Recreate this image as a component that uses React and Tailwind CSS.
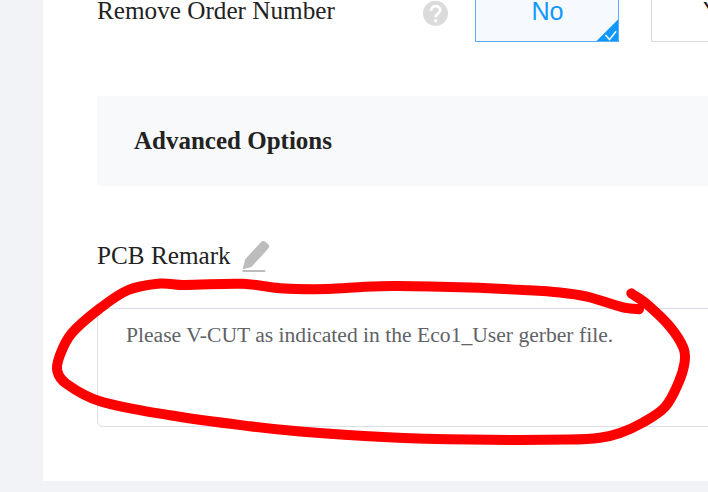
const HelpIcon = () => (
  <svg className="block h-[27px] w-[26px]" viewBox="0 0 26 27" fill="none">
    <circle cx="13.5" cy="13.3" r="12.5" fill="#dbdbdb" />
    <path
      d="M9.1 10.8C9.1 7.9 10.9 6.2 13.5 6.2s4.7 1.6 4.7 4c0 3-4.5 3.4-4.5 7"
      stroke="#fff"
      strokeWidth="2.7"
    />
    <circle cx="13.6" cy="20.7" r="1.7" fill="#fff" />
  </svg>
);

const PencilIcon = () => (
  <svg className="block h-[34px] w-[30px]" viewBox="0 0 30 34" fill="#bcbcbc">
    <path d="M0.6 29.2 3.2 19.2 18.9 2.2Q21.2 -0.2 23.4 1.8L26.2 4.2Q28.4 6.1 26.3 8.6L9.4 26.9Z" />
    <path d="M0.5 30h22.8v2H0.5z" />
  </svg>
);

function Choice({ label, selected }) {
  return (
    <div
      className={
        "relative flex h-[42px] w-36 shrink-0 justify-center border border-t-0 pl-px font-['Liberation_Sans',sans-serif] text-[25.2px] leading-[23px] " +
        (selected ? "border-[#5aacf5] bg-[#f6faff] text-[#1098ff]" : "border-[#d9d9d9] bg-white text-[#222]")
      }
    >
      <span>{label}</span>
      {selected && (
        <svg className="absolute right-0 bottom-0 h-[22px] w-[22px]" viewBox="0 0 22 22">
          <path d="M22 0.5v21.5H0.5z" fill="#1098ff" />
          <path d="m9.5 16 4 4.6 6.6-8.3" fill="none" stroke="#fff" strokeWidth="1.5" />
        </svg>
      )}
    </div>
  );
}

const strokePoints = [
  [639, 309.3], [623, 307.3], [587, 296.7], [560, 292.5], [523, 290], [470, 287.6],
  [397, 286], [365, 286.7], [328, 289], [280, 288.2], [243, 283.8], [183, 285],
  [160, 283.5], [128.3, 290], [100, 308.3], [71.7, 333.3], [60, 355], [57.3, 371],
  [66.7, 384], [100, 401.3], [170, 415.3], [250, 426.3], [300, 431.5], [383, 437],
  [470, 439.6], [570, 439.6], [600, 437.8], [620, 433], [643, 422.5], [665, 407],
  [678.3, 383.3], [684.5, 363], [683.6, 348.3], [670, 326.7], [646.7, 304], [631.3, 293.3],
];

// Catmull-Rom spline through the points, written as cubic segments
function smoothPath(p) {
  let d = `M${p[0][0]} ${p[0][1]}`;
  for (let i = 0; i < p.length - 1; i++) {
    const a = p[i - 1] || p[i];
    const b = p[i];
    const c = p[i + 1];
    const e = p[i + 2] || c;
    // handles are limited to a third of the segment so uneven spacing stays smooth
    const len = Math.hypot(c[0] - b[0], c[1] - b[1]) / 3;
    const t1 = len / Math.hypot(c[0] - a[0], c[1] - a[1]);
    const t2 = len / Math.hypot(e[0] - b[0], e[1] - b[1]);
    d += `C${b[0] + (c[0] - a[0]) * t1} ${b[1] + (c[1] - a[1]) * t1} ${c[0] - (e[0] - b[0]) * t2} ${c[1] - (e[1] - b[1]) * t2} ${c[0]} ${c[1]}`;
  }
  return d;
}

export default function App() {
  return (
    <div className="relative h-[492px] w-[708px] overflow-hidden bg-[#f1f3f7] pl-[43px] font-['Liberation_Serif',serif] text-[25.2px] leading-7 text-[#222]">
      <main className="h-[481px] w-[780px] bg-white pl-[54px]">
        <div className="flex h-[42px] items-start">
          <div className="w-[325px] shrink-0 leading-[22px]">Remove Order Number</div>
          <div className="w-[53px] shrink-0">
            <HelpIcon />
          </div>
          <div className="flex gap-8">
            <Choice label="No" selected />
            <Choice label="Yes" />
          </div>
        </div>
        <h2 className="mt-[54px] flex h-[90px] items-center bg-[#f7f9fb] pl-[37px] text-[25px] font-bold">
          Advanced Options
        </h2>
        <div className="mt-[54px] flex h-[34px] items-start gap-[11px]">
          <span className="mt-0.5">PCB Remark</span>
          <PencilIcon />
        </div>
        <div className="mt-[34px] h-[119px] rounded-md border border-[#dcdfe6] bg-white px-7 pt-[13px] text-[21.6px] leading-[26px] text-[#606266]">
          Please V-CUT as indicated in the Eco1_User gerber file.
        </div>
      </main>
      <svg
        className="pointer-events-none absolute inset-0 h-[492px] w-[708px]"
        viewBox="0 0 708 492"
        fill="none"
        stroke="#ff0000"
        strokeWidth="10"
        strokeLinecap="round"
        strokeLinejoin="round"
      >
        <path d={smoothPath(strokePoints)} />
      </svg>
    </div>
  );
}
